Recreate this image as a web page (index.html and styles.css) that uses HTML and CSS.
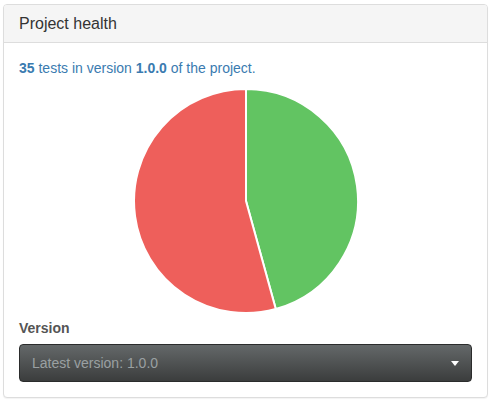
FILE: index.html
```html
<!DOCTYPE html>
<html>
<head>
<meta charset="utf-8">
<link rel="stylesheet" href="styles.css">
</head>
<body>
<div class="panel">
  <div class="panel-heading">Project health</div>
  <div class="panel-body">
    <p class="summary"><strong>35</strong> tests in version <strong>1.0.0</strong> of the project.</p>
    <div class="chart">
      <svg width="226" height="226" viewBox="0 0 226 226">
        <path d="M113,113 L113,1 A112,112 0 0 1 142.79,220.97 Z" fill="#62c462" stroke="#fff" stroke-width="2" stroke-linejoin="round"/>
        <path d="M113,113 L142.79,220.97 A112,112 0 1 1 113,1 Z" fill="#ee5f5b" stroke="#fff" stroke-width="2" stroke-linejoin="round"/>
      </svg>
    </div>
    <label class="label">Version</label>
    <div class="select">
      <span class="select-text">Latest version: 1.0.0</span>
      <span class="caret"></span>
    </div>
  </div>
</div>
</body>
</html>
```
FILE: styles.css
```css
html, body {
  margin: 0;
  background: #fff;
}
body {
  padding: 4px 5px 5px 3px;
  font-family: "Liberation Sans", Arial, sans-serif;
  font-size: 14px;
  line-height: 20px;
  color: #333;
}
.panel {
  border: 1px solid #ddd;
  border-radius: 4px;
  box-shadow: 0 1px 1px rgba(0,0,0,.05);
  background: #fff;
}
.panel-heading {
  background: #f5f5f5;
  border-bottom: 1px solid #ddd;
  border-radius: 3px 3px 0 0;
  padding: 10px 15px 9px;
  font-size: 16px;
  line-height: 18px;
  color: #333;
}
.panel-body {
  padding: 15px;
}
.summary {
  margin: 0;
  color: #3a7bb0;
}
.summary strong {
  font-weight: bold;
}
.chart {
  display: flex;
  justify-content: center;
  margin-top: 10px;
}
.chart svg {
  display: block;
}
.label {
  display: block;
  margin-top: 4px;
  margin-bottom: 6px;
  font-weight: bold;
  color: #555;
}
.select {
  height: 38px;
  box-sizing: border-box;
  border: 1px solid #2b2c2c;
  border-radius: 4px;
  background: linear-gradient(#646869, #3b3d3d);
  display: flex;
  align-items: center;
  justify-content: space-between;
  padding: 0 12px 0 12px;
}
.select-text {
  color: #9aa0a2;
}
.caret {
  width: 0;
  height: 0;
  border-top: 5px solid #fff;
  border-left: 4px solid transparent;
  border-right: 4px solid transparent;
}
```
